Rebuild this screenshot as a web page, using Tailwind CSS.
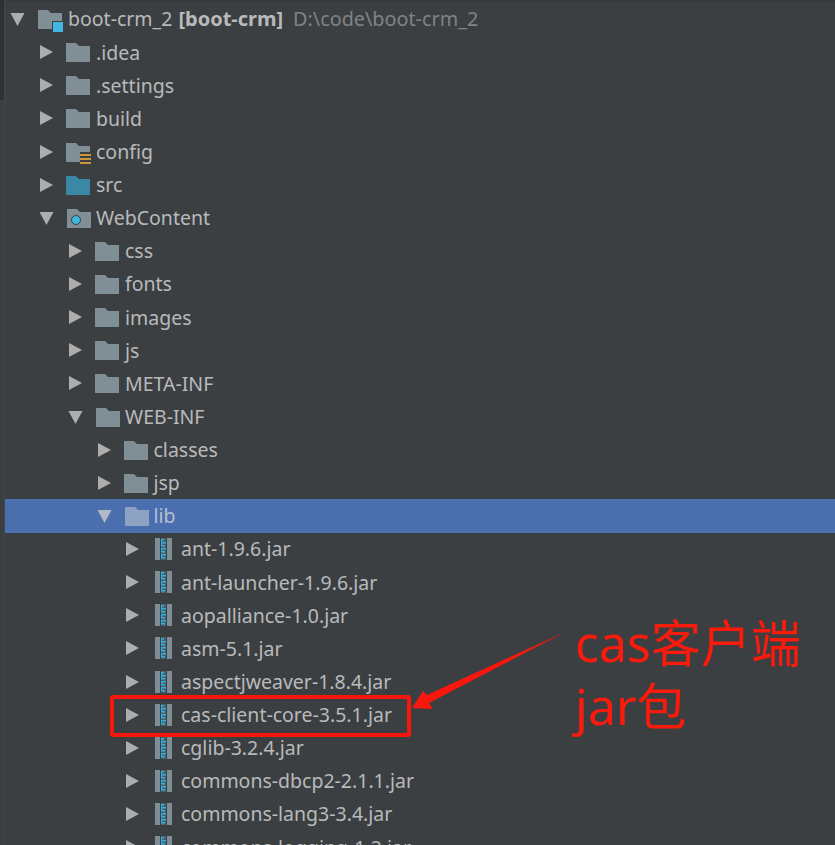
<!DOCTYPE html>
<html lang="zh">
<head>
    <meta charset="UTF-8">
    <title>boot-crm_2</title>
    <script src="https://cdn.jsdelivr.net/npm/@tailwindcss/browser@4"></script>
</head>
<body class="bg-[#3c3f41]">
    <svg width="0" height="0" class="absolute">
        <defs>
            <symbol id="open" viewBox="0 0 14 14"><path d="M0 1H14L7 14Z" fill="currentColor"/></symbol>
            <symbol id="closed" viewBox="0 0 14 14"><path d="M1 0L14 7L1 14Z" fill="currentColor"/></symbol>
            <symbol id="folder" viewBox="0 0 24 20"><path d="M0 1H10L13 4H24V20H0Z" fill="currentColor"/></symbol>
            <symbol id="jar" viewBox="0 0 24 24">
                <path d="M3 1H8V23H3ZM15 1H20V23H15Z" fill="#7f8d94"/>
                <path d="M9 1H14V23H9Z" fill="#45626e"/>
                <path d="M9 2H12V3.500H10V5H14V6.500H10V8H13V9.500H9V11H14V12.500H10V14H13V15.500H9V17H14V18.500H10V20H13V21.500H9Z" fill="#2fb0de"/>
            </symbol>
        </defs>
    </svg>

    <div class="relative h-[845px] w-[835px] overflow-hidden font-['Noto_Sans','Liberation_Sans',sans-serif] text-[19.5px] text-[#b8babb]">
        <div class="absolute left-0 top-0 h-[2px] w-full bg-[#343a42]"></div>
        <div class="absolute left-0 top-0 h-[100px] w-[4px] bg-[#2e3032]"></div>
        <div class="absolute left-[4px] top-0 h-full w-px bg-[#45484a]"></div>

        <div class="pt-[2.500px] pl-[5px]">
            <div class="flex h-[33.13px] items-center pl-[5px]">
                <svg class="h-[14px] w-[15px] shrink-0 text-[#adadad]"><use href="#open"/></svg>
                <div class="relative ml-[13px] mr-[6px] h-[20px] w-[24px] shrink-0">
                    <svg class="h-[20px] w-[24px] text-[#808e96]"><use href="#folder"/></svg>
                    <div class="absolute -bottom-[4px] -right-[2px] h-[12px] w-[12px] border border-[#3c3f41] bg-[#40b6e0]"></div>
                </div>
                <span class="whitespace-pre">boot-crm_2</span>
                <b class="ml-[6px] text-[20px] font-bold">[boot-crm]</b>
                <span class="ml-[10px] text-[19.8px] text-[#7f8386]">D:\code\boot-crm_2</span>
            </div>

            <div class="flex h-[33.13px] items-center pl-[34px]"><svg class="mr-[13px] h-[14px] w-[14px] shrink-0 text-[#adadad]"><use href="#closed"/></svg><svg class="mr-[6px] h-[20px] w-[24px] shrink-0 text-[#808e96]"><use href="#folder"/></svg><span>.idea</span></div>
            <div class="flex h-[33.13px] items-center pl-[34px]"><svg class="mr-[13px] h-[14px] w-[14px] shrink-0 text-[#adadad]"><use href="#closed"/></svg><svg class="mr-[6px] h-[20px] w-[24px] shrink-0 text-[#808e96]"><use href="#folder"/></svg><span>.settings</span></div>
            <div class="flex h-[33.13px] items-center pl-[34px]"><svg class="mr-[13px] h-[14px] w-[14px] shrink-0 text-[#adadad]"><use href="#closed"/></svg><svg class="mr-[6px] h-[20px] w-[24px] shrink-0 text-[#808e96]"><use href="#folder"/></svg><span>build</span></div>
            <div class="flex h-[33.13px] items-center pl-[34px]">
                <svg class="mr-[13px] h-[14px] w-[14px] shrink-0 text-[#adadad]"><use href="#closed"/></svg>
                <div class="relative mr-[6px] h-[20px] w-[24px] shrink-0">
                    <svg class="h-[20px] w-[24px] text-[#808e96]"><use href="#folder"/></svg>
                    <div class="absolute -bottom-[4px] -right-[1px] flex h-[14px] w-[11px] flex-col justify-between border-2 border-x-0 border-[#3c3f41] bg-[#3c3f41]">
                        <div class="h-[2px] bg-[#c9973a]"></div><div class="h-[2px] bg-[#c9973a]"></div><div class="h-[2px] bg-[#c9973a]"></div>
                    </div>
                </div>
                <span>config</span>
            </div>
            <div class="flex h-[33.13px] items-center pl-[34px]"><svg class="mr-[13px] h-[14px] w-[14px] shrink-0 text-[#adadad]"><use href="#closed"/></svg><svg class="mr-[6px] h-[20px] w-[24px] shrink-0 text-[#3a87a6]"><use href="#folder"/></svg><span>src</span></div>
            <div class="flex h-[33.13px] items-center pl-[34px]">
                <svg class="mr-[13px] h-[14px] w-[15px] shrink-0 text-[#adadad]"><use href="#open"/></svg>
                <div class="relative mr-[5px] h-[20px] w-[24px] shrink-0">
                    <svg class="h-[20px] w-[24px] text-[#808e96]"><use href="#folder"/></svg>
                    <div class="absolute bottom-[3px] left-[4px] h-[10px] w-[10px] rounded-full border border-[#3c3f41] bg-[#40b6e0]"></div>
                </div>
                <span>WebContent</span>
            </div>

            <div class="flex h-[33.13px] items-center pl-[63px]"><svg class="mr-[13px] h-[14px] w-[14px] shrink-0 text-[#adadad]"><use href="#closed"/></svg><svg class="mr-[6px] h-[20px] w-[24px] shrink-0 text-[#808e96]"><use href="#folder"/></svg><span>css</span></div>
            <div class="flex h-[33.13px] items-center pl-[63px]"><svg class="mr-[13px] h-[14px] w-[14px] shrink-0 text-[#adadad]"><use href="#closed"/></svg><svg class="mr-[6px] h-[20px] w-[24px] shrink-0 text-[#808e96]"><use href="#folder"/></svg><span>fonts</span></div>
            <div class="flex h-[33.13px] items-center pl-[63px]"><svg class="mr-[13px] h-[14px] w-[14px] shrink-0 text-[#adadad]"><use href="#closed"/></svg><svg class="mr-[6px] h-[20px] w-[24px] shrink-0 text-[#808e96]"><use href="#folder"/></svg><span>images</span></div>
            <div class="flex h-[33.13px] items-center pl-[63px]"><svg class="mr-[13px] h-[14px] w-[14px] shrink-0 text-[#adadad]"><use href="#closed"/></svg><svg class="mr-[6px] h-[20px] w-[24px] shrink-0 text-[#808e96]"><use href="#folder"/></svg><span>js</span></div>
            <div class="flex h-[33.13px] items-center pl-[63px]"><svg class="mr-[13px] h-[14px] w-[14px] shrink-0 text-[#adadad]"><use href="#closed"/></svg><svg class="mr-[6px] h-[20px] w-[24px] shrink-0 text-[#808e96]"><use href="#folder"/></svg><span>META-INF</span></div>
            <div class="flex h-[33.13px] items-center pl-[63px]"><svg class="mr-[13px] h-[14px] w-[15px] shrink-0 text-[#adadad]"><use href="#open"/></svg><svg class="mr-[5px] h-[20px] w-[24px] shrink-0 text-[#808e96]"><use href="#folder"/></svg><span>WEB-INF</span></div>

            <div class="flex h-[33.13px] items-center pl-[91.500px]"><svg class="mr-[13px] h-[14px] w-[14px] shrink-0 text-[#adadad]"><use href="#closed"/></svg><svg class="mr-[6px] h-[20px] w-[24px] shrink-0 text-[#808e96]"><use href="#folder"/></svg><span>classes</span></div>
            <div class="flex h-[33.13px] items-center pl-[91.500px]"><svg class="mr-[13px] h-[14px] w-[14px] shrink-0 text-[#adadad]"><use href="#closed"/></svg><svg class="mr-[6px] h-[20px] w-[24px] shrink-0 text-[#808e96]"><use href="#folder"/></svg><span>jsp</span></div>
            <div class="flex h-[33.13px] items-center bg-[#4b6eaf] pl-[91.500px] text-[#b6bfd2]"><svg class="mr-[13px] h-[14px] w-[15px] shrink-0 text-[#b2b8c6]"><use href="#open"/></svg><svg class="mr-[5px] h-[20px] w-[24px] shrink-0 text-[#8ea2c2]"><use href="#folder"/></svg><span>lib</span></div>

            <div class="flex h-[33.13px] items-center pl-[120px]"><svg class="mr-[13px] h-[14px] w-[14px] shrink-0 text-[#adadad]"><use href="#closed"/></svg><svg class="mr-[5px] h-[24px] w-[24px] shrink-0"><use href="#jar"/></svg><span>ant-1.9.6.jar</span></div>
            <div class="flex h-[33.13px] items-center pl-[120px]"><svg class="mr-[13px] h-[14px] w-[14px] shrink-0 text-[#adadad]"><use href="#closed"/></svg><svg class="mr-[5px] h-[24px] w-[24px] shrink-0"><use href="#jar"/></svg><span>ant-launcher-1.9.6.jar</span></div>
            <div class="flex h-[33.13px] items-center pl-[120px]"><svg class="mr-[13px] h-[14px] w-[14px] shrink-0 text-[#adadad]"><use href="#closed"/></svg><svg class="mr-[5px] h-[24px] w-[24px] shrink-0"><use href="#jar"/></svg><span>aopalliance-1.0.jar</span></div>
            <div class="flex h-[33.13px] items-center pl-[120px]"><svg class="mr-[13px] h-[14px] w-[14px] shrink-0 text-[#adadad]"><use href="#closed"/></svg><svg class="mr-[5px] h-[24px] w-[24px] shrink-0"><use href="#jar"/></svg><span>asm-5.1.jar</span></div>
            <div class="flex h-[33.13px] items-center pl-[120px]"><svg class="mr-[13px] h-[14px] w-[14px] shrink-0 text-[#adadad]"><use href="#closed"/></svg><svg class="mr-[5px] h-[24px] w-[24px] shrink-0"><use href="#jar"/></svg><span>aspectjweaver-1.8.4.jar</span></div>
            <div class="flex h-[33.13px] items-center pl-[120px]"><svg class="mr-[13px] h-[14px] w-[14px] shrink-0 text-[#adadad]"><use href="#closed"/></svg><svg class="mr-[5px] h-[24px] w-[24px] shrink-0"><use href="#jar"/></svg><span>cas-client-core-3.5.1.jar</span></div>
            <div class="flex h-[33.13px] items-center pl-[120px]"><svg class="mr-[13px] h-[14px] w-[14px] shrink-0 text-[#adadad]"><use href="#closed"/></svg><svg class="mr-[5px] h-[24px] w-[24px] shrink-0"><use href="#jar"/></svg><span>cglib-3.2.4.jar</span></div>
            <div class="flex h-[33.13px] items-center pl-[120px]"><svg class="mr-[13px] h-[14px] w-[14px] shrink-0 text-[#adadad]"><use href="#closed"/></svg><svg class="mr-[5px] h-[24px] w-[24px] shrink-0"><use href="#jar"/></svg><span>commons-dbcp2-2.1.1.jar</span></div>
            <div class="flex h-[33.13px] items-center pl-[120px]"><svg class="mr-[13px] h-[14px] w-[14px] shrink-0 text-[#adadad]"><use href="#closed"/></svg><svg class="mr-[5px] h-[24px] w-[24px] shrink-0"><use href="#jar"/></svg><span>commons-lang3-3.4.jar</span></div>
            <div class="flex h-[33.13px] items-center pl-[120px]"><svg class="mr-[13px] h-[14px] w-[14px] shrink-0 text-[#adadad]"><use href="#closed"/></svg><svg class="mr-[5px] h-[24px] w-[24px] shrink-0"><use href="#jar"/></svg><span>commons-logging-1.2.jar</span></div>
        </div>

        <!-- annotation drawn over the tree -->
        <div class="absolute left-[110px] top-[695px] h-[42px] w-[301px] rounded-[3px] border-[4px] border-[#f8170c]"></div>
        <svg class="absolute left-0 top-0 h-[845px] w-[835px]" viewBox="0 0 835 845"><path d="M412 708L423 691L427 695L565 632L429 703L433 709Z" fill="#f8170c"/></svg>
        <div class="absolute left-[575px] top-[612px] w-[250px] font-['Noto_Sans','Noto_Sans_CJK_SC',sans-serif] text-[50px] leading-[63px] text-[#fb1a0c]">cas客户端<br>jar包</div>
    </div>
</body>
</html>
